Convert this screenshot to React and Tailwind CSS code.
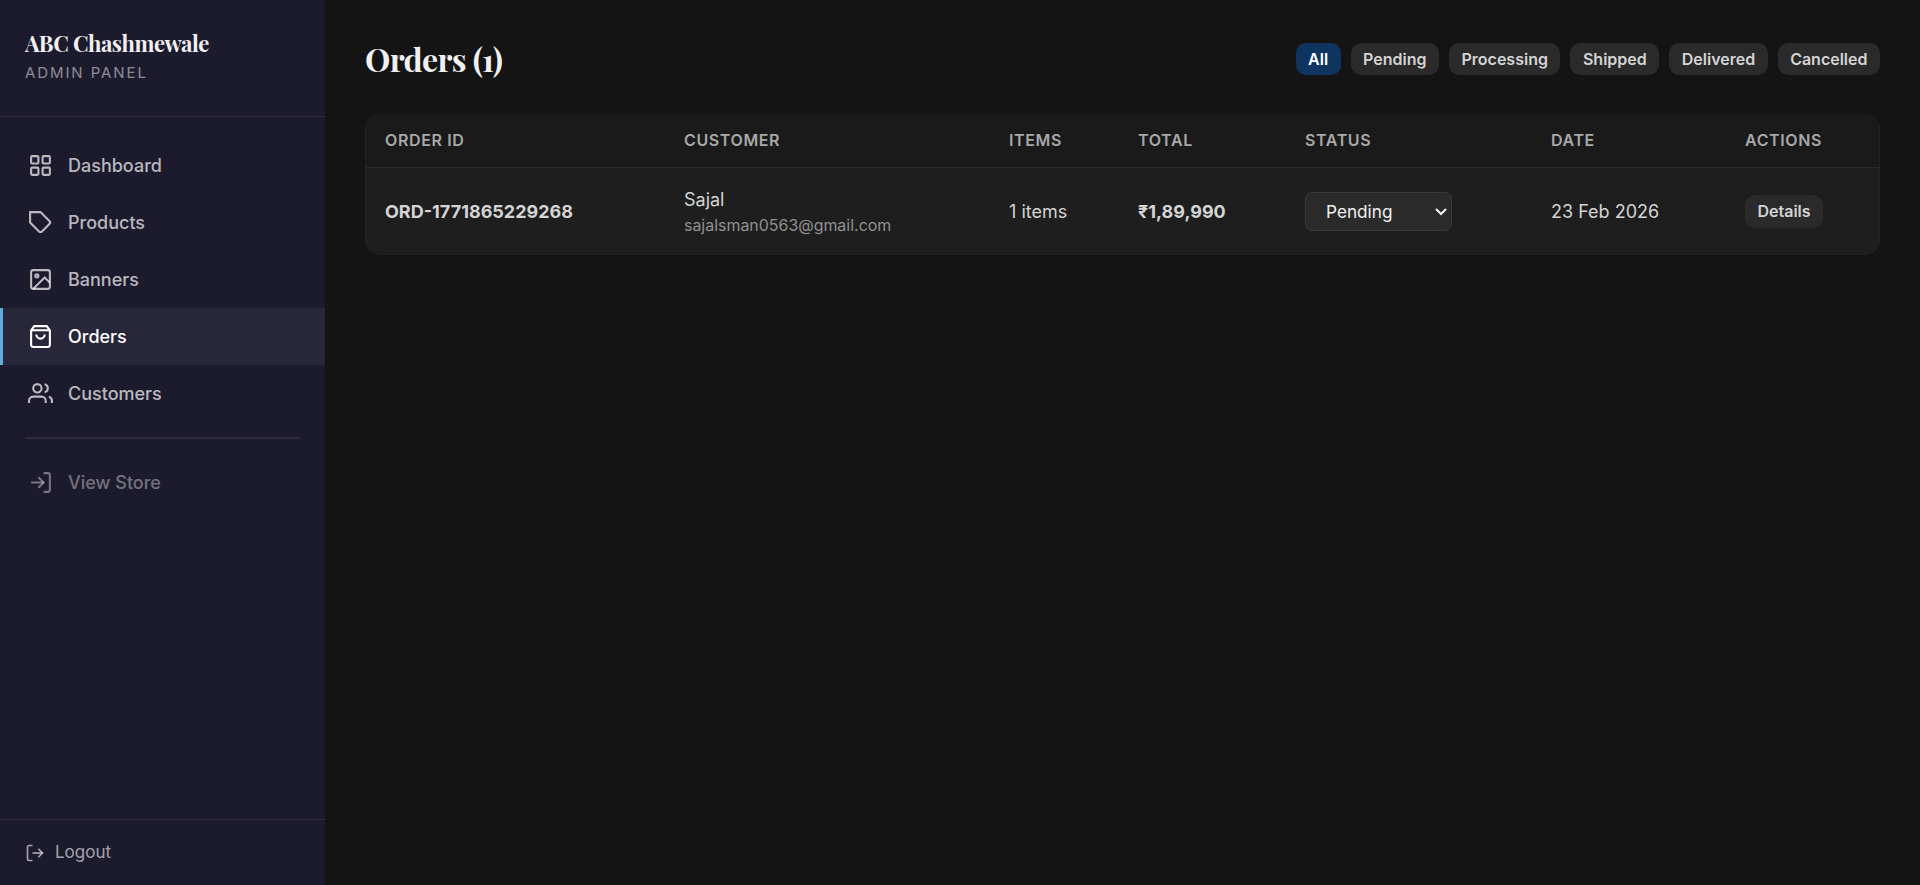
import { useState } from 'react'
import clsx from 'clsx'

const navItems = [
    { label: 'Dashboard', icon: 'grid' },
    { label: 'Products', icon: 'tag' },
    { label: 'Banners', icon: 'image' },
    { label: 'Orders', icon: 'bag' },
    { label: 'Customers', icon: 'users' },
]

const filters = ['All', 'Pending', 'Processing', 'Shipped', 'Delivered', 'Cancelled']
const statuses = ['Pending', 'Processing', 'Shipped', 'Delivered', 'Cancelled']
const columns = ['Order ID', 'Customer', 'Items', 'Total', 'Status', 'Date', 'Actions']

const orders = [
    {
        id: 'ORD-1771865229268',
        name: 'Sajal',
        email: 'sajalsman0563@gmail.com',
        items: 1,
        total: 189990,
        status: 'Pending',
        date: '23 Feb 2026',
    },
]

const paths = {
    grid: (
        <>
            <rect x="3" y="3" width="7" height="7" rx="1" />
            <rect x="14" y="3" width="7" height="7" rx="1" />
            <rect x="14" y="14" width="7" height="7" rx="1" />
            <rect x="3" y="14" width="7" height="7" rx="1" />
        </>
    ),
    tag: <path d="M20.59 13.41l-7.17 7.17a2 2 0 0 1-2.83 0L2 12V2h10l8.59 8.59a2 2 0 0 1 0 2.82z" />,
    image: (
        <>
            <rect x="3" y="3" width="18" height="18" rx="2" />
            <circle cx="8.5" cy="8.5" r="1.5" />
            <path d="M21 15l-5-5L5 21" />
        </>
    ),
    bag: (
        <>
            <path d="M6 2L3 6v14a2 2 0 0 0 2 2h14a2 2 0 0 0 2-2V6l-3-4z" />
            <path d="M3 6h18" />
            <path d="M16 10a4 4 0 0 1-8 0" />
        </>
    ),
    users: (
        <>
            <path d="M17 21v-2a4 4 0 0 0-4-4H5a4 4 0 0 0-4 4v2" />
            <circle cx="9" cy="7" r="4" />
            <path d="M23 21v-2a4 4 0 0 0-3-3.87" />
            <path d="M16 3.13a4 4 0 0 1 0 7.75" />
        </>
    ),
    store: (
        <>
            <path d="M15 3h4a2 2 0 0 1 2 2v14a2 2 0 0 1-2 2h-4" />
            <path d="M10 17l5-5-5-5" />
            <path d="M15 12H3" />
        </>
    ),
    logout: (
        <>
            <path d="M9 21H5a2 2 0 0 1-2-2V5a2 2 0 0 1 2-2h4" />
            <path d="M16 17l5-5-5-5" />
            <path d="M21 12H9" />
        </>
    ),
}

function Icon({ name, className }) {
    return (
        <svg viewBox="0 0 24 24" fill="none" stroke="currentColor" strokeWidth="2" className={clsx('shrink-0', className)}>
            {paths[name]}
        </svg>
    )
}

function Sidebar() {
    return (
        <aside className="flex w-[325px] shrink-0 flex-col bg-[#1c1a2d]">
            {/* Brand */}
            <div className="h-[117px] border-b border-white/8 px-[25px] pt-[29px]">
                <h2 className="font-['Playfair_Display','Liberation_Serif',serif] text-[22px] leading-[28px] font-bold tracking-[-0.02em] whitespace-nowrap text-[#f0f0f0]">
                    ABC Chashmewale
                </h2>
                <p className="mt-1 text-[15px] leading-[24px] tracking-[1.9px] text-white/50 uppercase">Admin Panel</p>
            </div>

            {/* Navigation */}
            <nav className="flex-1 pt-5">
                {navItems.map(({ label, icon }) => (
                    <a
                        key={label}
                        href="#"
                        className={clsx(
                            'flex h-[57px] items-center gap-[15px] border-l-[3px] pl-[25px] text-[18px] font-medium',
                            label === 'Orders'
                                ? 'border-[#5dade2] bg-[#282739] text-white'
                                : 'border-transparent text-white/70'
                        )}
                    >
                        <Icon name={icon} className="size-[25px]" />
                        {label}
                    </a>
                ))}
                <div className="mx-[25px] my-[15px] h-[2px] bg-white/8" />
                <a href="#" className="flex h-[57px] items-center gap-[15px] border-l-[3px] border-transparent pl-[25px] text-[18px] font-medium text-white/40">
                    <Icon name="store" className="size-[25px]" />
                    View Store
                </a>
            </nav>

            {/* Logout */}
            <div className="flex h-[66px] items-center border-t border-white/8 px-[25px]">
                <button className="flex items-center gap-[10px] text-[17px] text-white/60">
                    <Icon name="logout" className="size-5" />
                    Logout
                </button>
            </div>
        </aside>
    )
}

function StatusSelect({ value }) {
    const [status, setStatus] = useState(value)
    return (
        <div className="relative w-[147px]">
            <select
                value={status}
                onChange={(e) => setStatus(e.target.value)}
                className="block h-[39px] w-full appearance-none rounded-[7px] border border-[#383838] bg-[#2a2a2a] pt-0.5 pl-5 text-[17.2px] text-[#f0f0f0]"
            >
                {statuses.map((s) => (
                    <option key={s}>{s}</option>
                ))}
            </select>
            <svg viewBox="0 0 12 8" fill="none" stroke="#f0f0f0" strokeWidth="2" className="pointer-events-none absolute top-[16px] right-[5px] h-2 w-3">
                <path d="M1 1l5 5 5-5" />
            </svg>
        </div>
    )
}

export default function App() {
    const [filter, setFilter] = useState('All')

    return (
        <div className="flex h-screen overflow-hidden bg-[#141414] font-['Inter',sans-serif] text-[#d4d4d4]">
            <Sidebar />

            <main className="flex-1 px-10 pt-10">
                {/* Title and filters */}
                <div className="flex h-10 items-start justify-between">
                    <h1 className="font-['Playfair_Display','Liberation_Serif',serif] text-[32px] leading-[37px] font-bold tracking-[-0.02em] text-[#f0f0f0]">
                        Orders (1)
                    </h1>
                    <div className="flex gap-[10px] pt-[3px]">
                        {filters.map((f) => (
                            <button
                                key={f}
                                onClick={() => setFilter(f)}
                                className={clsx(
                                    'h-8 rounded-[10px] px-[12.5px] text-[16px] font-semibold',
                                    f === filter ? 'bg-[#0f3460] text-white' : 'bg-[#2a2a2a]'
                                )}
                            >
                                {f}
                            </button>
                        ))}
                    </div>
                </div>

                {/* Orders table */}
                <div className="mt-[34px] overflow-hidden rounded-[15px] border border-t-0 border-[#222] bg-[#1e1e1e]">
                    <table className="w-full table-fixed border-separate border-spacing-0 text-left text-[18px]">
                        <colgroup>
                            <col className="w-[299px]" />
                            <col className="w-[325px]" />
                            <col className="w-[129px]" />
                            <col className="w-[167px]" />
                            <col className="w-[246px]" />
                            <col className="w-[194px]" />
                            <col />
                        </colgroup>
                        <thead>
                            <tr className="bg-[#1a1a1a]">
                                {columns.map((c) => (
                                    <th key={c} className="h-[54px] border-b border-[#2a2a2a] px-[19px] pb-0.5 text-[16px] font-semibold tracking-[0.62px] text-[#a8a8a8] uppercase">{c}</th>
                                ))}
                            </tr>
                        </thead>
                        <tbody>
                            {orders.map((o) => (
                                <tr key={o.id} className="h-[86px]">
                                    <td className="px-[19px] font-bold">{o.id}</td>
                                    <td className="px-[19px] pt-[3px]">
                                        <p className="leading-[26px]">{o.name}</p>
                                        <p className="text-[15.95px] leading-[25px] text-[#909090]">{o.email}</p>
                                    </td>
                                    <td className="px-[19px]">{o.items} items</td>
                                    <td className="px-[19px] font-bold">₹{o.total.toLocaleString('en-IN')}</td>
                                    <td className="px-[19px]"><StatusSelect value={o.status} /></td>
                                    <td className="px-[19px]">{o.date}</td>
                                    <td className="px-[19px]">
                                        <button className="block h-[33px] rounded-[10px] bg-[#2a2a2a] px-[12.5px] text-[16px] font-semibold">Details</button>
                                    </td>
                                </tr>
                            ))}
                        </tbody>
                    </table>
                </div>
            </main>
        </div>
    )
}
